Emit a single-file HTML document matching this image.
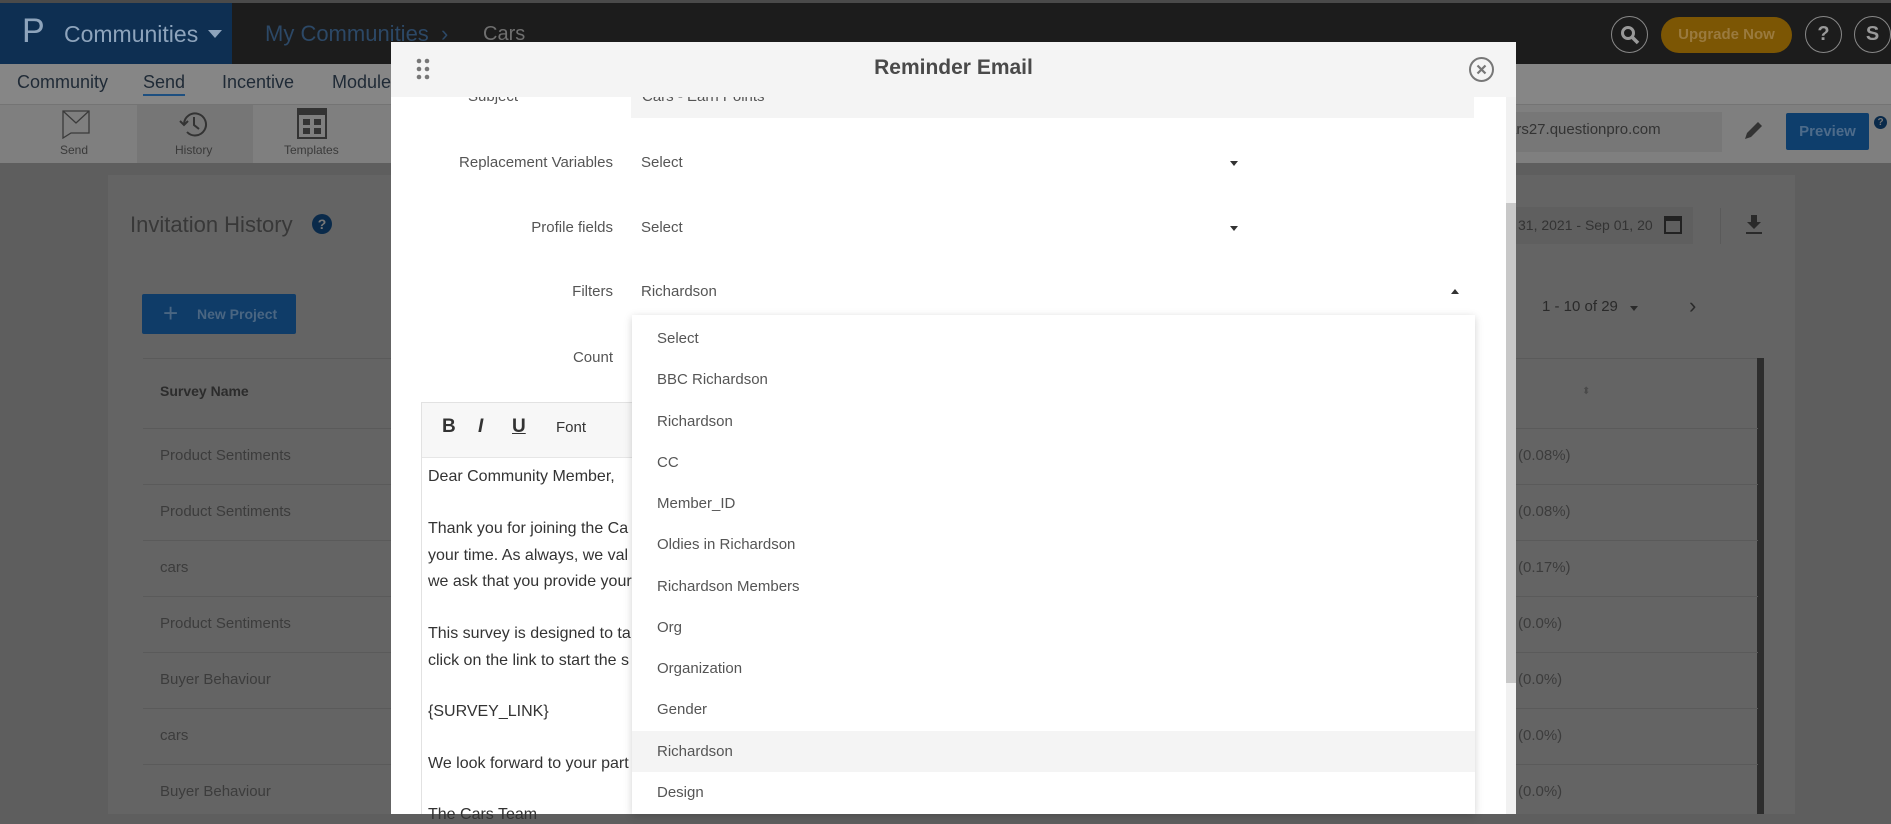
<!DOCTYPE html>
<html><head><meta charset="utf-8"><style>
*{margin:0;padding:0;box-sizing:border-box}
body{width:1891px;height:814px;overflow:hidden;position:relative;background:#5e5e5e;font-family:"Liberation Sans",sans-serif}
.a{position:absolute;white-space:nowrap}
.lbl{position:absolute;right:1278px;font-size:15px;color:#555;text-align:right}
.opt{position:absolute;left:0;width:100%;height:41px;line-height:41px;padding-left:25px;font-size:15px;color:#555}
.row{position:absolute;left:143px;width:1615px;height:56px;border-top:1px solid #5a5a5a}
.row span{position:absolute;left:17px;top:18px;font-size:15px;color:#3c3c3c}
.row b{position:absolute;left:1375px;top:18px;font-size:15px;color:#3c3c3c;font-weight:normal}
.et{position:absolute;left:428px;font-size:16px;color:#333}
</style></head><body>
<!-- top bar -->
<div class="a" style="left:0;top:0;width:1891px;height:64px;background:#1c1c1c;border-top:3px solid #4a4a4a"></div>
<div class="a" style="left:0;top:3px;width:232px;height:61px;background:#0e2f52"></div>
<div class="a" style="left:22px;top:12px;font-size:34px;color:#8ea4bc">P</div>
<div class="a" style="left:64px;top:21px;font-size:23px;color:#8ea4bc">Communities</div>
<div class="a" style="left:208px;top:30px;width:0;height:0;border-left:7px solid transparent;border-right:7px solid transparent;border-top:8px solid #8ea4bc"></div>
<div class="a" style="left:265px;top:21px;font-size:22px;color:#2c4866">My Communities &nbsp;›</div>
<div class="a" style="left:483px;top:23px;font-size:20px;color:#6f6f6f">Cars</div>
<div class="a" style="left:1611px;top:16px;width:37px;height:37px;border:1.5px solid #888;border-radius:50%"></div>
<svg class="a" style="left:1619px;top:24px" width="22" height="22" viewBox="0 0 22 22"><circle cx="9" cy="9" r="5.5" fill="none" stroke="#999" stroke-width="3"/><path d="M13 13l6 6" stroke="#999" stroke-width="3.5"/></svg>
<div class="a" style="left:1661px;top:17px;width:131px;height:36px;background:#7c5604;border-radius:18px;color:#9a7a3e;font-size:15px;font-weight:bold;line-height:36px;text-align:center">Upgrade Now</div>
<div class="a" style="left:1805px;top:16px;width:37px;height:37px;border:1.5px solid #888;border-radius:50%;color:#999;font-weight:bold;font-size:20px;text-align:center;line-height:34px">?</div>
<div class="a" style="left:1854px;top:16px;width:37px;height:37px;border:1.5px solid #888;border-radius:50%;color:#999;font-weight:bold;font-size:20px;text-align:center;line-height:34px">S</div>
<!-- nav -->
<div class="a" style="left:0;top:64px;width:1891px;height:40px;background:#868686"></div>
<div class="a" style="left:17px;top:72px;font-size:18px;color:#1f2a36">Community</div>
<div class="a" style="left:143px;top:72px;font-size:18px;color:#1f2a36;border-bottom:2px solid #1d4f80;padding-bottom:1px">Send</div>
<div class="a" style="left:222px;top:72px;font-size:18px;color:#1f2a36">Incentive</div>
<div class="a" style="left:332px;top:72px;font-size:18px;color:#1f2a36">Module</div>
<div class="a" style="left:0;top:104px;width:1891px;height:59px;background:#7f7f7f;border-top:1px solid #747474"></div>
<div class="a" style="left:137px;top:105px;width:116px;height:58px;background:#767676"></div>
<svg class="a" style="left:61px;top:109px" width="30" height="30" viewBox="0 0 30 30"><path d="M2 2h26v22H10l-8 5z" fill="none" stroke="#3a3a3a" stroke-width="1.3"/><path d="M2 2l13 12L28 2" fill="none" stroke="#3a3a3a" stroke-width="1.3"/></svg>
<div class="a" style="left:60px;top:143px;font-size:12px;color:#3a3a3a">Send</div>
<svg class="a" style="left:177px;top:108px" width="34" height="32" viewBox="0 0 34 32"><path d="M7 16a11 11 0 1 1 3 8" fill="none" stroke="#333" stroke-width="2"/><path d="M3 13l4 4 4-4" fill="none" stroke="#333" stroke-width="2"/><path d="M17 9v8l5 4" fill="none" stroke="#333" stroke-width="2"/></svg>
<div class="a" style="left:175px;top:143px;font-size:12px;color:#3a3a3a">History</div>
<svg class="a" style="left:297px;top:108px" width="30" height="31" viewBox="0 0 30 31"><rect x="1" y="1" width="28" height="29" fill="none" stroke="#333" stroke-width="2"/><rect x="1" y="1" width="28" height="6" fill="#333"/><rect x="6" y="11" width="7" height="6" fill="#333"/><rect x="17" y="11" width="7" height="6" fill="#333"/><rect x="6" y="20" width="7" height="6" fill="#333"/><rect x="17" y="20" width="7" height="6" fill="#333"/></svg>
<div class="a" style="left:284px;top:143px;font-size:12px;color:#3a3a3a">Templates</div>
<div class="a" style="left:1500px;top:112px;width:222px;height:40px;background:#777"></div>
<div class="a" style="left:1508px;top:121px;font-size:15px;color:#333">ars27.questionpro.com</div>
<svg class="a" style="left:1742px;top:118px" width="22" height="24" viewBox="0 0 22 24"><path d="M3 21l2-6L16 4l4 4L9 19z" fill="#333"/></svg>
<div class="a" style="left:1786px;top:113px;width:83px;height:37px;background:#0e3e6c;border-radius:2px;color:#4d6b8a;font-size:15px;font-weight:bold;line-height:37px;text-align:center">Preview</div>
<div class="a" style="left:1874px;top:116px;width:13px;height:13px;background:#0a2a4a;border-radius:50%;color:#777;font-size:10px;font-weight:bold;text-align:center;line-height:13px">?</div>
<!-- card -->
<div class="a" style="left:108px;top:175px;width:1687px;height:639px;background:#646464"></div>
<div class="a" style="left:130px;top:212px;font-size:22px;color:#383838">Invitation History</div>
<div class="a" style="left:312px;top:214px;width:20px;height:20px;background:#0a2a4a;border-radius:50%;color:#777;font-size:14px;font-weight:bold;text-align:center;line-height:20px">?</div>
<div class="a" style="left:142px;top:294px;width:154px;height:40px;background:#0f3c68;border-radius:2px"></div>
<div class="a" style="left:163px;top:298px;font-size:26px;color:#4a6682">+</div>
<div class="a" style="left:197px;top:306px;font-size:14px;color:#4a6682;font-weight:bold">New Project</div>
<div class="a" style="left:1515px;top:207px;width:178px;height:37px;background:#5f5f5f"></div>
<div class="a" style="left:1518px;top:217px;font-size:14px;color:#333">31, 2021 - Sep 01, 20</div>
<svg class="a" style="left:1664px;top:214px" width="18" height="20" viewBox="0 0 18 20"><rect x="1" y="3" width="16" height="16" fill="none" stroke="#222" stroke-width="2"/><rect x="1" y="3" width="16" height="4" fill="#222"/></svg>
<div class="a" style="left:1720px;top:208px;width:1px;height:36px;background:#5a5a5a"></div>
<svg class="a" style="left:1745px;top:215px" width="18" height="20" viewBox="0 0 18 20"><path d="M6 0h6v7h4l-7 7-7-7h4z M1 17h16v2H1z" fill="#2a2a2a"/></svg>
<div class="a" style="left:1542px;top:298px;font-size:15px;color:#2a2a2a">1 - 10 of 29</div>
<div class="a" style="left:1630px;top:306px;width:0;height:0;border-left:4px solid transparent;border-right:4px solid transparent;border-top:5px solid #2a2a2a"></div>
<div class="a" style="left:1689px;top:293px;font-size:22px;color:#2a2a2a">›</div>
<div class="a" style="left:143px;top:358px;width:1615px;height:70px;border-top:1px solid #5a5a5a"></div>
<div class="a" style="left:160px;top:383px;font-size:14px;font-weight:bold;color:#2c2c2c">Survey Name</div>
<div class="a" style="left:1582px;top:386px;font-size:10px;color:#4a4a4a">⬍</div>
<div class="a" style="left:1757px;top:358px;width:7px;height:456px;background:#2d2d2d"></div>
<div class="row" style="top:428px"><span>Product Sentiments</span><b>(0.08%)</b></div>
<div class="row" style="top:484px"><span>Product Sentiments</span><b>(0.08%)</b></div>
<div class="row" style="top:540px"><span>cars</span><b>(0.17%)</b></div>
<div class="row" style="top:596px"><span>Product Sentiments</span><b>(0.0%)</b></div>
<div class="row" style="top:652px"><span>Buyer Behaviour</span><b>(0.0%)</b></div>
<div class="row" style="top:708px"><span>cars</span><b>(0.0%)</b></div>
<div class="row" style="top:764px"><span>Buyer Behaviour</span><b>(0.0%)</b></div>
<!-- modal -->
<div class="a" style="left:391px;top:42px;width:1125px;height:772px;background:#fff;overflow:hidden">
 <div class="a" style="left:0;top:0;width:1125px;height:55px;background:#f4f4f4;z-index:3"></div>
 <svg class="a" style="left:25px;top:16px;z-index:4" width="14" height="22" viewBox="0 0 14 22"><g fill="#777"><circle cx="3" cy="3" r="2.3"/><circle cx="11" cy="3" r="2.3"/><circle cx="3" cy="11" r="2.3"/><circle cx="11" cy="11" r="2.3"/><circle cx="3" cy="19" r="2.3"/><circle cx="11" cy="19" r="2.3"/></g></svg>
 <div class="a" style="left:0;width:1125px;top:14px;text-align:center;font-size:21px;font-weight:bold;color:#4a4a4a;z-index:4">Reminder Email</div>
 <svg class="a" style="left:1077px;top:14px;z-index:4" width="27" height="27" viewBox="0 0 27 27"><circle cx="13.5" cy="13.5" r="11.5" fill="none" stroke="#777" stroke-width="2"/><path d="M9.5 9.5l8 8M17.5 9.5l-8 8" stroke="#777" stroke-width="2.2"/></svg>
 <div class="a" style="left:1115px;top:55px;width:10px;height:717px;background:#f1f1f1"></div>
 <div class="a" style="left:1115px;top:161px;width:10px;height:480px;background:#c8c8c8"></div>
 <div class="a" style="left:240px;top:55px;width:843px;height:21px;background:#f4f4f4"></div>
 <div class="a" style="left:251px;top:46px;font-size:15px;color:#555">Cars - Earn Points</div>
 <div class="a" style="left:77px;top:46px;font-size:15px;color:#555">Subject</div>
</div>
<div class="lbl" style="top:154px">Replacement Variables</div>
<div class="a" style="left:641px;top:154px;font-size:15px;color:#555">Select</div>
<div class="a" style="left:1230px;top:161px;border-left:4px solid transparent;border-right:4px solid transparent;border-top:5px solid #333"></div>
<div class="lbl" style="top:219px">Profile fields</div>
<div class="a" style="left:641px;top:219px;font-size:15px;color:#555">Select</div>
<div class="a" style="left:1230px;top:226px;border-left:4px solid transparent;border-right:4px solid transparent;border-top:5px solid #333"></div>
<div class="lbl" style="top:283px">Filters</div>
<div class="a" style="left:641px;top:283px;font-size:15px;color:#555">Richardson</div>
<div class="a" style="left:1451px;top:289px;border-left:4px solid transparent;border-right:4px solid transparent;border-bottom:5px solid #333"></div>
<div class="lbl" style="top:349px">Count</div>
<!-- editor -->
<div class="a" style="left:421px;top:402px;width:260px;height:412px;border-left:1px solid #e2e2e2;border-top:1px solid #e2e2e2"></div>
<div class="a" style="left:422px;top:403px;width:260px;height:55px;background:#f7f7f7;border-bottom:1px solid #e6e6e6"></div>
<div class="a" style="left:442px;top:416px;font-size:19px;font-weight:bold;color:#333">B</div>
<div class="a" style="left:478px;top:416px;font-size:19px;font-weight:bold;font-style:italic;color:#333">I</div>
<div class="a" style="left:512px;top:416px;font-size:19px;font-weight:bold;color:#333;text-decoration:underline">U</div>
<div class="a" style="left:556px;top:419px;font-size:15px;color:#333">Font</div>
<div class="et" style="top:468px">Dear Community Member,</div>
<div class="et" style="top:520px">Thank you for joining the Ca</div>
<div class="et" style="top:547px">your time. As always, we val</div>
<div class="et" style="top:573px">we ask that you provide your</div>
<div class="et" style="top:625px">This survey is designed to ta</div>
<div class="et" style="top:652px">click on the link to start the s</div>
<div class="et" style="top:703px">{SURVEY_LINK}</div>
<div class="et" style="top:755px">We look forward to your part</div>
<div class="et" style="top:806px">The Cars Team</div>
<!-- dropdown -->
<div class="a" style="left:632px;top:315px;width:843px;height:499px;background:#fff;box-shadow:0 2px 8px rgba(0,0,0,.18);overflow:hidden">
 <div class="opt" style="top:3px">Select</div>
 <div class="opt" style="top:44px">BBC Richardson</div>
 <div class="opt" style="top:86px">Richardson</div>
 <div class="opt" style="top:127px">CC</div>
 <div class="opt" style="top:168px">Member_ID</div>
 <div class="opt" style="top:209px">Oldies in Richardson</div>
 <div class="opt" style="top:251px">Richardson Members</div>
 <div class="opt" style="top:292px">Org</div>
 <div class="opt" style="top:333px">Organization</div>
 <div class="opt" style="top:374px">Gender</div>
 <div class="opt" style="top:416px;background:#f4f4f4">Richardson</div>
 <div class="opt" style="top:457px">Design</div>
</div>
</body></html>
